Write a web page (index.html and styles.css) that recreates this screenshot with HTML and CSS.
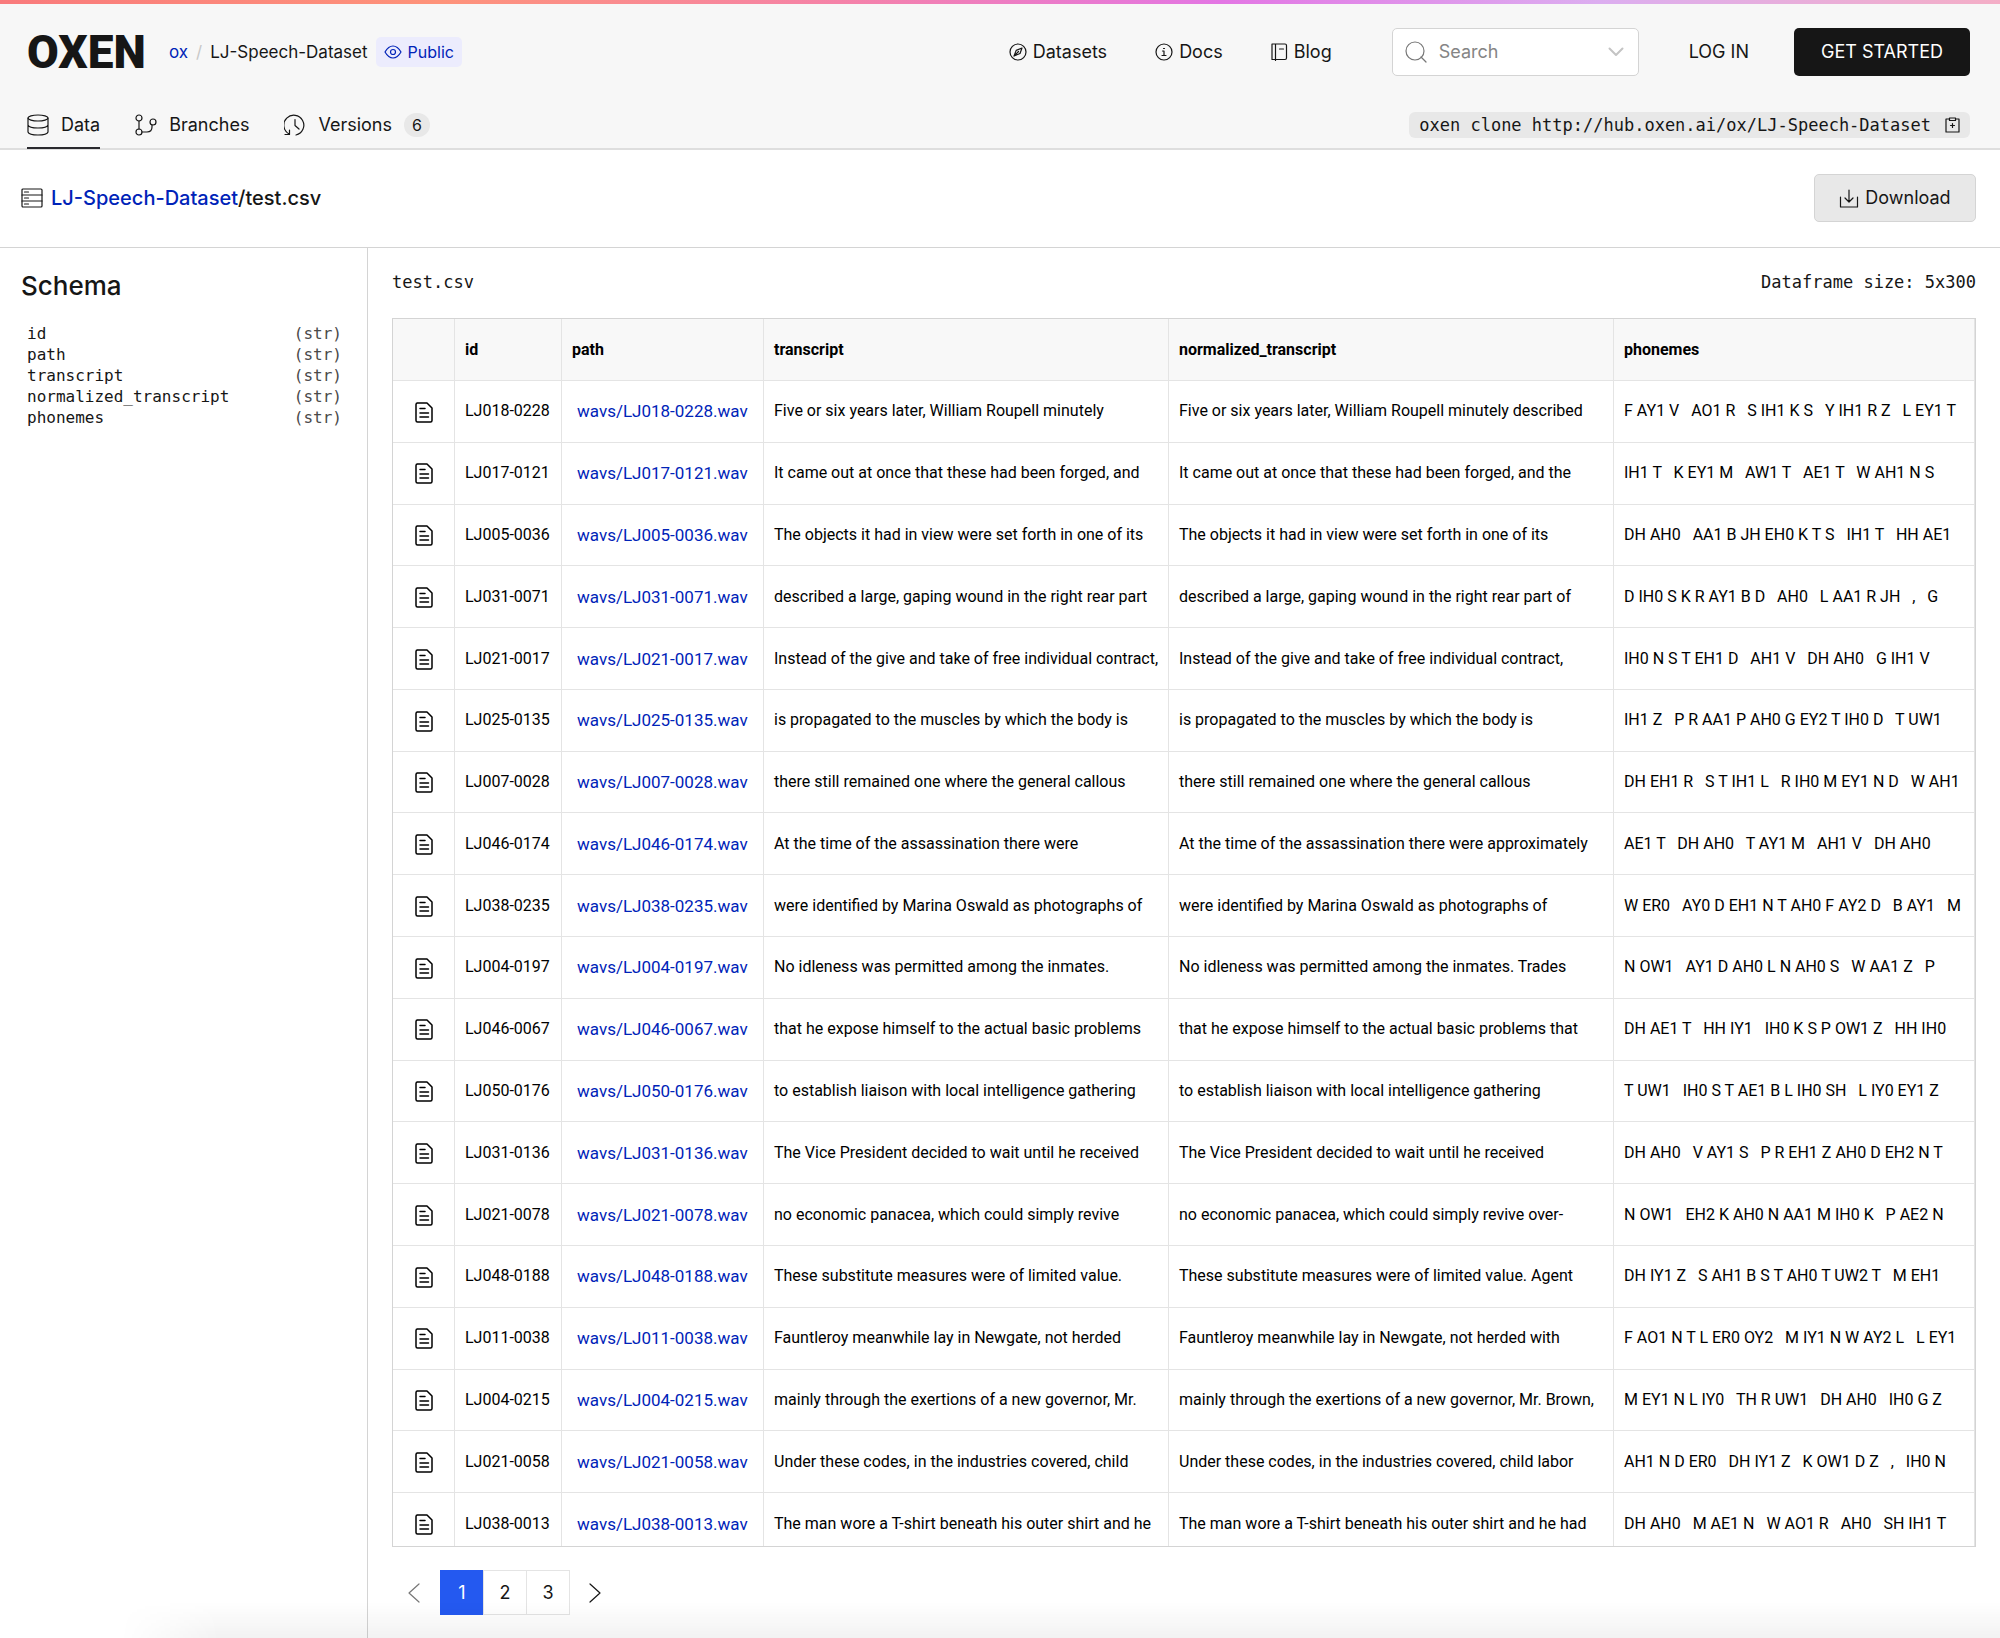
FILE: index.html
```html
<!DOCTYPE html>
<html lang="en">

<head>
    <meta charset="UTF-8">
    <meta name="viewport" content="width=device-width, initial-scale=1.0">
    <title>ox/LJ-Speech-Dataset</title>
    <link rel="stylesheet" href="styles.css">
</head>

<body>
    <svg class="sprite" aria-hidden="true">
        <symbol id="icon-file" viewBox="0 0 18 21">
            <path d="M2 1h10l5 5v12.500q0 1.500-1.500 1.500h-13q-1.500 0-1.500-1.500v-16q0-1.500 1.500-1.500zM5 6.500h5M5 11h8.500M5 15h8.500" />
        </symbol>
    </svg>

    <header class="site-header">
        <div class="top-row">
            <a class="logo" href="#">OXEN</a>
            <div class="breadcrumb">
                <a href="#">ox</a>
                <span class="slash">/</span>
                <span>LJ-Speech-Dataset</span>
                <span class="visibility">
                    <svg class="icon" width="18" height="14" viewBox="0 0 18 14">
                        <path d="M1 7Q4.500 1 9 1t8 6q-3.500 6-8 6T1 7z" />
                        <circle cx="9" cy="7" r="2.500" />
                    </svg>
                    Public
                </span>
            </div>
            <nav class="main-nav">
                <a href="#">
                    <svg class="icon" width="18" height="18" viewBox="0 0 18 18">
                        <circle cx="9" cy="9" r="8" />
                        <path d="M13 5l-2 5.500L5 13l2.200-5.600zM5 13l4.500-4.500" />
                    </svg>
                    Datasets
                </a>
                <a href="#">
                    <svg class="icon" width="18" height="18" viewBox="0 0 18 18">
                        <circle cx="9" cy="9" r="8" />
                        <path d="M7.500 8H9v4.500M7 12.500h4M8.500 5.500H9.500" />
                    </svg>
                    Docs
                </a>
                <a href="#">
                    <svg class="icon" width="17" height="18" viewBox="0 0 17 18">
                        <path d="M1 1h13q1.500 0 1.500 1.500v12.500q0 1.500-1.500 1.500H1zM4.500 1v16.500M8.500 6h4" />
                    </svg>
                    Blog
                </a>
            </nav>
            <div class="search">
                <svg class="icon" width="22" height="22" viewBox="0 0 22 22">
                    <circle cx="10" cy="10" r="9" />
                    <path d="M16 16l5 5" />
                </svg>
                <input type="text" placeholder="Search" aria-label="Search">
                <svg class="icon chevron" width="16" height="10" viewBox="0 0 16 10">
                    <path d="M1.500 1.500L8 8l6.500-6.500" />
                </svg>
            </div>
            <a class="login" href="#">LOG IN</a>
            <button type="button" class="get-started">GET STARTED</button>
        </div>

        <div class="tab-row">
            <nav class="tabs">
                <a class="tab active" href="#">
                    <svg class="icon" width="22" height="22" viewBox="0 0 22 22">
                        <ellipse cx="11" cy="4" rx="10" ry="3" />
                        <path d="M1 4v14q1 3 10 3t10-3V4M1 11q1 3 10 3t10-3" />
                    </svg>
                    Data
                </a>
                <a class="tab" href="#">
                    <svg class="icon" width="22" height="22" viewBox="0 0 22 22">
                        <circle cx="4" cy="4" r="3" />
                        <circle cx="4" cy="18" r="3" />
                        <circle cx="18" cy="8" r="3" />
                        <path d="M4 7v8M7 18h5q5 0 5-5v-2" />
                    </svg>
                    Branches
                </a>
                <a class="tab" href="#">
                    <svg class="icon" width="22" height="22" viewBox="0 0 22 22">
                        <path d="M5 20A10 10 0 1 1 12 21M1 20.500h4.500V16M11 5.500v6l4 3.500" />
                    </svg>
                    Versions
                    <span class="count">6</span>
                </a>
            </nav>
            <div class="clone">
                <code>oxen clone http://hub.oxen.ai/ox/LJ-Speech-Dataset</code>
                <button type="button" class="copy" aria-label="Copy">
                    <svg class="icon" width="15" height="16" viewBox="0 0 15 16">
                        <path d="M4 2H1v13h13V2h-3M4.500 1h6v2.500h-6zM7.500 6.500v4M5.500 8.500h4" />
                    </svg>
                </button>
            </div>
        </div>
    </header>

    <div class="title-bar">
        <h1>
            <svg class="icon" width="22" height="20" viewBox="0 0 22 20">
                <rect x="1" y="1" width="20" height="18" rx="1" />
                <path d="M1 7h20M1 13h20M3.500 4h4M3.500 10h4M3.500 16h4" />
            </svg>
            <span><a href="#">LJ-Speech-Dataset</a>/test.csv</span>
        </h1>
        <button type="button" class="download">
            <svg class="icon" width="20" height="19" viewBox="0 0 20 19">
                <path d="M1.500 8v10h17V8M10 1v12M6 9l4 4 4-4" />
            </svg>
            Download
        </button>
    </div>

    <main>
        <aside class="schema">
            <h2>Schema</h2>
            <ul>
                <li>id <span>(str)</span></li>
                <li>path <span>(str)</span></li>
                <li>transcript <span>(str)</span></li>
                <li>normalized_transcript <span>(str)</span></li>
                <li>phonemes <span>(str)</span></li>
            </ul>
        </aside>

        <section class="content">
            <div class="file-info">
                <span>test.csv</span>
                <span>Dataframe size: 5x300</span>
            </div>
            <div class="table-wrap">
                <table>
                    <colgroup>
                        <col class="col-icon">
                        <col class="col-id">
                        <col class="col-path">
                        <col class="col-transcript">
                        <col class="col-normalized">
                        <col>
                    </colgroup>
                    <thead>
                        <tr>
                            <th></th>
                            <th>id</th>
                            <th>path</th>
                            <th>transcript</th>
                            <th>normalized_transcript</th>
                            <th>phonemes</th>
                        </tr>
                    </thead>
                    <tbody id="rows"></tbody>
                </table>
            </div>
            <nav class="pagination">
                <button type="button" class="arrow" aria-label="Previous page" disabled>
                    <svg class="icon" width="12" height="20" viewBox="0 0 12 20">
                        <path d="M11 1L1 10l10 9" />
                    </svg>
                </button>
                <button type="button" class="page current">1</button>
                <button type="button" class="page">2</button>
                <button type="button" class="page">3</button>
                <button type="button" class="arrow" aria-label="Next page">
                    <svg class="icon" width="12" height="20" viewBox="0 0 12 20">
                        <path d="M1 1l10 9-10 9" />
                    </svg>
                </button>
            </nav>
        </section>
    </main>

    <script>
        // id, transcript, normalized transcript, phonemes
        const rows = [
            ['LJ018-0228', 'Five or six years later, William Roupell minutely', 'Five or six years later, William Roupell minutely described', 'F AY1 V   AO1 R   S IH1 K S   Y IH1 R Z   L EY1 T'],
            ['LJ017-0121', 'It came out at once that these had been forged, and', 'It came out at once that these had been forged, and the', 'IH1 T   K EY1 M   AW1 T   AE1 T   W AH1 N S'],
            ['LJ005-0036', 'The objects it had in view were set forth in one of its', 'The objects it had in view were set forth in one of its', 'DH AH0   AA1 B JH EH0 K T S   IH1 T   HH AE1'],
            ['LJ031-0071', 'described a large, gaping wound in the right rear part', 'described a large, gaping wound in the right rear part of', 'D IH0 S K R AY1 B D   AH0   L AA1 R JH   ,   G'],
            ['LJ021-0017', 'Instead of the give and take of free individual contract,', 'Instead of the give and take of free individual contract,', 'IH0 N S T EH1 D   AH1 V   DH AH0   G IH1 V'],
            ['LJ025-0135', 'is propagated to the muscles by which the body is', 'is propagated to the muscles by which the body is', 'IH1 Z   P R AA1 P AH0 G EY2 T IH0 D   T UW1'],
            ['LJ007-0028', 'there still remained one where the general callous', 'there still remained one where the general callous', 'DH EH1 R   S T IH1 L   R IH0 M EY1 N D   W AH1'],
            ['LJ046-0174', 'At the time of the assassination there were', 'At the time of the assassination there were approximately', 'AE1 T   DH AH0   T AY1 M   AH1 V   DH AH0'],
            ['LJ038-0235', 'were identified by Marina Oswald as photographs of', 'were identified by Marina Oswald as photographs of', 'W ER0   AY0 D EH1 N T AH0 F AY2 D   B AY1   M'],
            ['LJ004-0197', 'No idleness was permitted among the inmates.', 'No idleness was permitted among the inmates. Trades', 'N OW1   AY1 D AH0 L N AH0 S   W AA1 Z   P'],
            ['LJ046-0067', 'that he expose himself to the actual basic problems', 'that he expose himself to the actual basic problems that', 'DH AE1 T   HH IY1   IH0 K S P OW1 Z   HH IH0'],
            ['LJ050-0176', 'to establish liaison with local intelligence gathering', 'to establish liaison with local intelligence gathering', 'T UW1   IH0 S T AE1 B L IH0 SH   L IY0 EY1 Z'],
            ['LJ031-0136', 'The Vice President decided to wait until he received', 'The Vice President decided to wait until he received', 'DH AH0   V AY1 S   P R EH1 Z AH0 D EH2 N T'],
            ['LJ021-0078', 'no economic panacea, which could simply revive', 'no economic panacea, which could simply revive over-', 'N OW1   EH2 K AH0 N AA1 M IH0 K   P AE2 N'],
            ['LJ048-0188', 'These substitute measures were of limited value.', 'These substitute measures were of limited value. Agent', 'DH IY1 Z   S AH1 B S T AH0 T UW2 T   M EH1'],
            ['LJ011-0038', 'Fauntleroy meanwhile lay in Newgate, not herded', 'Fauntleroy meanwhile lay in Newgate, not herded with', 'F AO1 N T L ER0 OY2   M IY1 N W AY2 L   L EY1'],
            ['LJ004-0215', 'mainly through the exertions of a new governor, Mr.', 'mainly through the exertions of a new governor, Mr. Brown,', 'M EY1 N L IY0   TH R UW1   DH AH0   IH0 G Z'],
            ['LJ021-0058', 'Under these codes, in the industries covered, child', 'Under these codes, in the industries covered, child labor', 'AH1 N D ER0   DH IY1 Z   K OW1 D Z   ,   IH0 N'],
            ['LJ038-0013', 'The man wore a T-shirt beneath his outer shirt and he', 'The man wore a T-shirt beneath his outer shirt and he had', 'DH AH0   M AE1 N   W AO1 R   AH0   SH IH1 T']
        ];

        document.getElementById('rows').innerHTML = rows.map(([id, transcript, normalized, phonemes]) => `
            <tr>
                <td class="file"><svg class="icon" width="18" height="21"><use href="#icon-file" /></svg></td>
                <td>${id}</td>
                <td class="path"><a href="#">wavs/${id}.wav</a></td>
                <td>${transcript}</td>
                <td>${normalized}</td>
                <td>${phonemes}</td>
            </tr>`).join('');
    </script>
</body>

</html>
```
FILE: styles.css
```css
* {
    box-sizing: border-box;
}

body {
    margin: 0;
    height: 100vh;
    display: flex;
    flex-direction: column;
    overflow: hidden;
    font-family: Inter, Roboto, sans-serif;
    font-size: 18px;
    line-height: 24px;
    color: #161616;
    background: #fff;
}

/* soft shade along the bottom of the window */
body::after {
    content: "";
    position: fixed;
    left: 120px;
    right: 0;
    bottom: 0;
    height: 36px;
    background: linear-gradient(rgba(0, 0, 0, 0), rgba(0, 0, 0, 0.05));
    -webkit-mask-image: linear-gradient(90deg, transparent, #000 100px);
    mask-image: linear-gradient(90deg, transparent, #000 100px);
    pointer-events: none;
}

a {
    color: inherit;
    text-decoration: none;
}

button {
    font: inherit;
    color: inherit;
    cursor: pointer;
}

.sprite {
    display: none;
}

.icon {
    flex: none;
    fill: none;
    stroke: currentColor;
    stroke-width: 1.2;
    stroke-linecap: round;
    stroke-linejoin: round;
}

/* Header */
.site-header {
    position: relative;
    padding: 28px 30px 0 27px;
    background: #f7f7f7;
    border-bottom: 2px solid #dedede;
}

.site-header::before {
    content: "";
    position: absolute;
    top: 0;
    left: 0;
    right: 0;
    height: 4px;
    background: linear-gradient(90deg, #f97a7c 0%, #fe937a 22%, #f582a8 42%, #e376e4 61%, #dcaef0 80%, #f4aec6 100%);
}

.top-row {
    display: flex;
    align-items: center;
    height: 48px;
}

.logo {
    width: 142px;
    font-family: Roboto, sans-serif;
    font-size: 46px;
    font-weight: 900;
    line-height: 48px;
}

.breadcrumb {
    display: flex;
    align-items: center;
    gap: 8px;
    margin-right: auto;
    font-size: 17px;
}

.breadcrumb a,
.title-bar a,
.path a {
    color: #0023b8;
}

.slash {
    color: #c8c8c8;
}

.visibility {
    display: flex;
    align-items: center;
    gap: 6px;
    padding: 3px 8px;
    border-radius: 5px;
    background: #ececfd;
    color: #0023b8;
    font-size: 16px;
}

.main-nav {
    display: flex;
    gap: 48px;
    margin-right: 60px;
}

.main-nav a {
    display: flex;
    align-items: center;
    gap: 6px;
}

.search {
    display: flex;
    align-items: center;
    width: 247px;
    height: 48px;
    padding: 0 14px 0 12px;
    border: 1px solid #d4d4d4;
    border-radius: 5px;
    background: #fff;
    color: #777;
}

.search input {
    flex: 1;
    min-width: 0;
    padding: 0 12px;
    border: none;
    outline: none;
    background: none;
    font: inherit;
}

.search input::placeholder {
    color: #858585;
}

.search .chevron {
    color: #c4c4c4;
    stroke-width: 2;
}

.login {
    margin: 0 45px 0 50px;
}

.get-started {
    width: 176px;
    height: 48px;
    padding: 0;
    border: none;
    border-radius: 5px;
    background: #161616;
    color: #fff;
}

.tab-row {
    display: flex;
    align-items: center;
    justify-content: space-between;
    margin-top: 26px;
}

.tabs {
    display: flex;
    gap: 35px;
    margin-bottom: -1px;
}

.tab {
    display: flex;
    align-items: center;
    gap: 12px;
    height: 47px;
    border-bottom: 2px solid transparent;
}

.tab.active {
    border-bottom-color: #2a2a2e;
}

.count {
    width: 26px;
    border-radius: 12px;
    background: #e8e8e8;
    font-size: 16px;
    text-align: center;
}

.clone {
    display: flex;
    align-items: center;
    gap: 14px;
    padding: 1px 10px;
    border-radius: 6px;
    background: #e8e8e8;
}

.clone code,
.file-info {
    font-family: "DejaVu Sans Mono", monospace;
    font-size: 17px;
}

.copy {
    display: flex;
    padding: 0;
    border: none;
    background: none;
}

/* File title */
.title-bar {
    display: flex;
    align-items: center;
    justify-content: space-between;
    padding: 24px 24px 25px 21px;
    border-bottom: 1px solid #d4d4d4;
}

.title-bar h1 {
    display: flex;
    align-items: center;
    gap: 8px;
    margin: 0;
    font-size: 20px;
    font-weight: 500;
}

.download {
    display: flex;
    align-items: center;
    justify-content: center;
    gap: 6px;
    width: 162px;
    height: 48px;
    padding: 0;
    border: 1px solid #d4d4d4;
    border-radius: 5px;
    background: #e8e8e8;
}

main {
    flex: 1;
    display: flex;
    min-height: 0;
}

/* Schema sidebar */
.schema {
    width: 368px;
    padding: 21px 25px 0 21px;
    border-right: 1px solid #d4d4d4;
}

.schema h2 {
    margin: 0 0 20px;
    font-size: 26px;
    font-weight: 500;
    line-height: 34px;
}

.schema ul {
    margin: 0;
    padding: 0 0 0 6px;
    list-style: none;
    font-family: "DejaVu Sans Mono", monospace;
    font-size: 16px;
    line-height: 21px;
}

.schema li {
    display: flex;
    justify-content: space-between;
}

.schema li span {
    color: #4a4a4a;
}

/* Table */
.content {
    flex: 1;
    display: flex;
    flex-direction: column;
    min-width: 0;
    padding: 22px 24px 23px;
}

.file-info {
    display: flex;
    justify-content: space-between;
    margin-bottom: 24px;
}

.table-wrap {
    flex: 1;
    min-height: 0;
    overflow: hidden;
    border: 1px solid #d4d4d4;
}

table {
    width: 100%;
    height: 1236px;
    table-layout: fixed;
    border-collapse: separate;
    border-spacing: 0;
    font-family: Roboto, sans-serif;
    font-size: 16px;
    color: #000;
}

.col-icon {
    width: 62px;
}

.col-id {
    width: 107px;
}

.col-path {
    width: 202px;
}

.col-transcript {
    width: 405px;
}

.col-normalized {
    width: 445px;
}

th,
td {
    padding: 0 10px;
    border-right: 1px solid #e4e4e4;
    border-bottom: 1px solid #e4e4e4;
    text-align: left;
    white-space: pre;
    overflow: hidden;
}

th {
    height: 62px;
    background: #f8f8f8;
    font-weight: 700;
}

.file {
    padding: 0;
    text-align: center;
}

.file svg {
    vertical-align: middle;
    stroke-width: 1.5;
}

.path {
    padding-left: 15px;
    font-size: 17px;
}

/* Pagination */
.pagination {
    display: flex;
    margin: 23px 0 0 22px;
}

.pagination button {
    height: 45px;
    padding: 0;
    border: 1px solid #e4e4e4;
    background: none;
}

.pagination .page {
    width: 44px;
    margin-right: -1px;
}

.pagination .current {
    border-color: #2459f0;
    background: #2459f0;
    color: #fff;
}

.pagination .arrow {
    display: flex;
    align-items: center;
    width: 26px;
    border: none;
}

.pagination .arrow:first-child {
    margin-left: -6px;
    margin-right: 6px;
}

.pagination .arrow:last-child {
    margin-left: 20px;
}

.pagination .arrow:disabled {
    color: #777;
}
```
